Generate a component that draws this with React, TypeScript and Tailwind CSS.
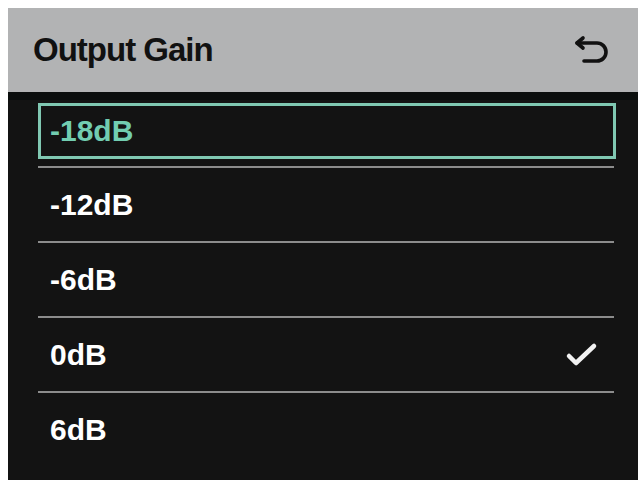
import React from "react";

const items = ["-18dB", "-12dB", "-6dB", "0dB", "6dB"];

function BackIcon() {
  return (
    <svg width="36" height="34" viewBox="0 0 36 34" fill="none" stroke="#111" strokeWidth="3.6" strokeLinecap="round" strokeLinejoin="round">
      <path d="M9 5 L3 10 L9 15" />
      <path d="M3 10 H23 A9 9 0 0 1 23 28 H10" />
    </svg>
  );
}

function Check() {
  return (
    <svg width="36" height="30" viewBox="0 0 36 30" fill="none" stroke="#f2f2f2" strokeWidth="4.5" strokeLinecap="round" strokeLinejoin="round">
      <path d="M5 16 L12 23 L30 6" />
    </svg>
  );
}

export default function App() {
  return (
    <div className="w-[642px] h-[484px] bg-white pl-[8px] pt-[8px] pr-[4px] pb-[4px]" style={{ fontFamily: '"Liberation Sans", Arial, sans-serif' }}>
      <div className="w-full h-full flex flex-col bg-[#131313]">
        <div className="h-[84px] bg-[#b2b3b4] flex items-center justify-between pl-[25px] pr-[28px]">
          <span className="text-[33px] font-bold text-[#111] tracking-[-1px]">Output Gain</span>
          <BackIcon />
        </div>
        <div className="flex-1 flex flex-col pl-[30px] pr-[24px] pt-[3px] border-t-[8px] border-[#0b0e0d]">
          {items.map((it, i) => (
            <div key={it} className="flex flex-col">
              {i === 0 ? (
                <div className="h-[56px] mr-[-2px] border-[3px] border-[#80c8b2] flex items-center pl-[9px] mb-[7px]">
                  <span className="text-[30px] font-bold text-[#72cdb1] leading-none">{it}</span>
                </div>
              ) : (
                <div className="h-[73px] flex items-center justify-between pl-[12px] pr-[14px]">
                  <span className="text-[30px] font-bold text-white leading-none">{it}</span>
                  {it === "0dB" && <Check />}
                </div>
              )}
              {i < items.length - 1 && <div className="h-[2px] bg-[#8c8c8c]" />}
            </div>
          ))}
        </div>
      </div>
    </div>
  );
}
